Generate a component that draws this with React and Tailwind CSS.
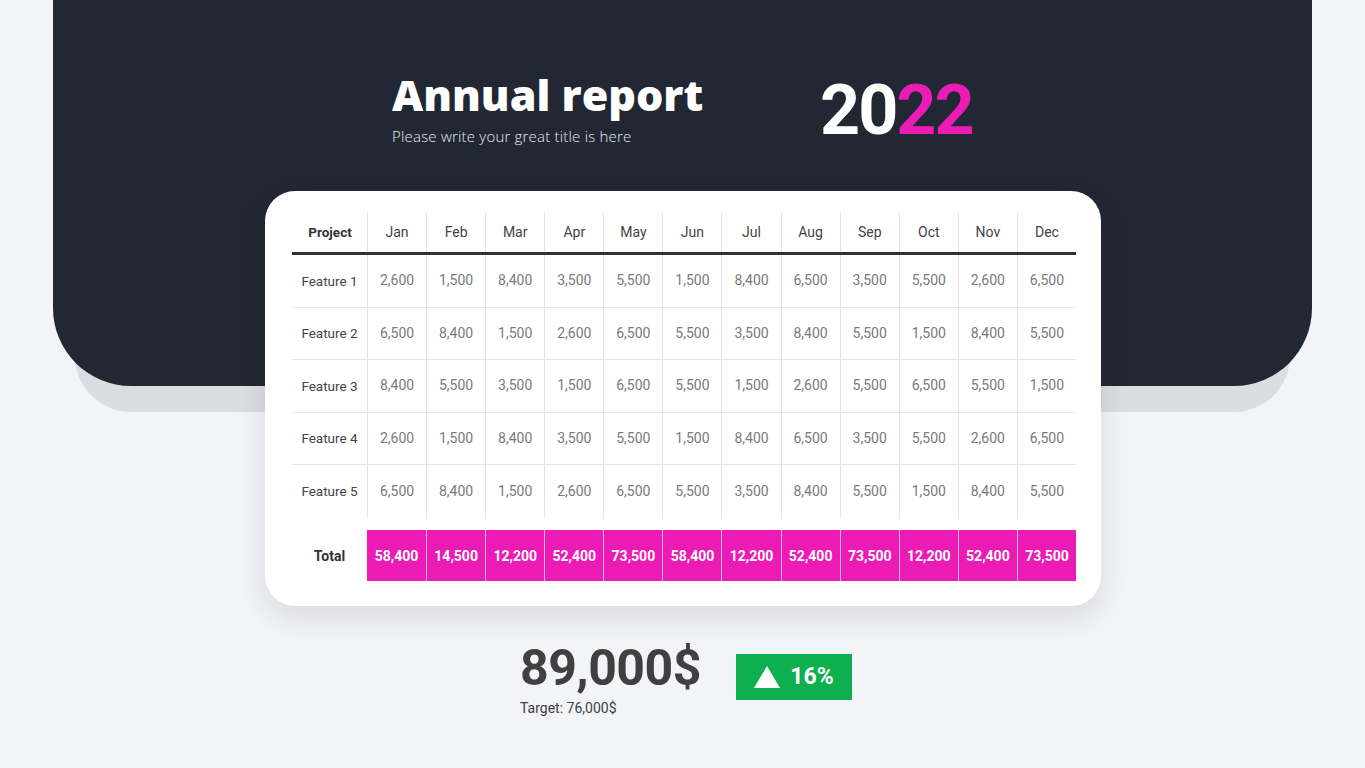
import React from "react";

const months = ["Jan","Feb","Mar","Apr","May","Jun","Jul","Aug","Sep","Oct","Nov","Dec"];
const rows = [
  ["Feature 1", ["2,600","1,500","8,400","3,500","5,500","1,500","8,400","6,500","3,500","5,500","2,600","6,500"]],
  ["Feature 2", ["6,500","8,400","1,500","2,600","6,500","5,500","3,500","8,400","5,500","1,500","8,400","5,500"]],
  ["Feature 3", ["8,400","5,500","3,500","1,500","6,500","5,500","1,500","2,600","5,500","6,500","5,500","1,500"]],
  ["Feature 4", ["2,600","1,500","8,400","3,500","5,500","1,500","8,400","6,500","3,500","5,500","2,600","6,500"]],
  ["Feature 5", ["6,500","8,400","1,500","2,600","6,500","5,500","3,500","8,400","5,500","1,500","8,400","5,500"]],
];
const totals = ["58,400","14,500","12,200","52,400","73,500","58,400","12,200","52,400","73,500","12,200","52,400","73,500"];

const grid = "grid grid-cols-[75px_repeat(12,minmax(0,1fr))]";

export default function App() {
  return (
    <div className="w-[1365px] h-[768px] bg-[#f3f4f8] overflow-hidden font-['Roboto',sans-serif]">
      <div className="mx-[53px] h-[386px] bg-[#222833] rounded-b-[78px] shadow-[0_48px_0_-22px_#dcdde2] relative">
        <div className="flex pt-[69px]">
          <div className="ml-[339px] w-[420px]">
            <div className="text-white text-[43px] leading-[52px] font-extrabold font-['Open_Sans',sans-serif] tracking-[0px]">Annual report</div>
            <div className="text-[#e9eaee] text-[15px] leading-[20px] mt-[5px] font-light font-['Open_Sans',sans-serif] tracking-[0.2px]">Please write your great title is here</div>
          </div>
          <div className="ml-[8px] mt-[1px] text-[70px] leading-[80px] font-bold tracking-[-2px]">
            <span className="text-white">20</span><span className="text-[#ec1bb5]">22</span>
          </div>
        </div>
      </div>
      <div className="relative -mt-[195px] ml-[265px] w-[836px] h-[415px] bg-white rounded-[30px] shadow-[0_12px_30px_rgba(30,35,50,0.12)] pt-[21px] pl-[27px] pr-[25px]">
        <div className={grid + " h-[43px] border-b-[3px] border-[#333]"}>
          <div className="flex items-center justify-center text-[13.5px] font-bold text-[#333] pl-[1px]">Project</div>
          {months.map((m) => (
            <div key={m} className="flex items-center justify-center border-l border-[#e3e3e3] text-[14px] text-[#444]">{m}</div>
          ))}
        </div>
        {rows.map(([name, vals], i) => (
          <div key={name} className={grid + " h-[52.5px] " + (i < 4 ? "border-b border-[#e6e6e6]" : "")}>
            <div className="flex items-center justify-center text-[13.5px] text-[#444]">{name}</div>
            {vals.map((v, j) => (
              <div key={j} className="flex items-center justify-center border-l border-[#e3e3e3] text-[14px] text-[#7a7a7a]">{v}</div>
            ))}
          </div>
        ))}
        <div className={grid + " h-[51px] mt-[12px]"}>
          <div className="flex items-center justify-center text-[14px] font-bold text-[#333] pt-[2px]">Total</div>
          {totals.map((v, j) => (
            <div key={j} className={"flex items-center justify-center bg-[#ec1bb5] text-white text-[14px] font-bold pt-[2px] " + (j > 0 ? "border-l border-[#f7b4e4]" : "")}>{v}</div>
          ))}
        </div>
      </div>
      <div className="flex mt-[32px] ml-[520px]">
        <div>
          <div className="text-[50px] leading-[60px] font-bold text-[#404040] tracking-[-0.5px]">89,000$</div>
          <div className="text-[14px] leading-[18px] text-[#404040] mt-[1px]">Target: 76,000$</div>
        </div>
        <div className="ml-[35px] mt-[16px] w-[116px] h-[46px] bg-[#0eaf4f] flex items-center justify-center gap-[10px]">
          <svg width="26" height="22" viewBox="0 0 26 22"><polygon points="13,0 26,22 0,22" fill="white" /></svg>
          <span className="text-white text-[23px] font-bold">16%</span>
        </div>
      </div>
    </div>
  );
}
